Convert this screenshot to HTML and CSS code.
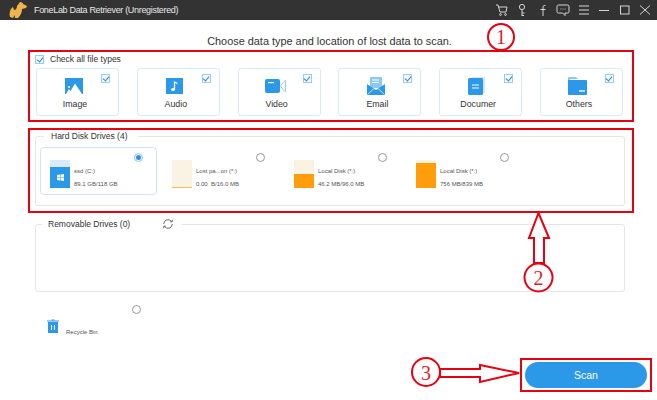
FILE: index.html
```html
<!DOCTYPE html>
<html lang="en">
<head>
<meta charset="utf-8">
<title>FoneLab Data Retriever</title>
<link rel="stylesheet" href="styles.css">
</head>
<body>
<div class="app">
  <header class="titlebar">
    <svg class="logo" viewBox="0 0 18 16" width="18" height="16"><path fill="#f0b44c" d="M1 15C0 11 1 7 4 5L5 8C7 8 8 6 8 4L11 0C13 0 14 1 14 2L18 4L17 6L13 7C13 10 12 13 9 16H6L6 13L4 16Z"/></svg>
    <span class="app-name">FoneLab Data Retriever (Unregistered)</span>
    <nav class="win-icons">
      <svg viewBox="0 0 14 14" width="14" height="14" class="wi"><path d="M1 2H3L5 9H11L12 4H3.500"/><circle cx="5.500" cy="11.500" r=".9"/><circle cx="10.500" cy="11.500" r=".9"/></svg>
      <svg viewBox="0 0 14 14" width="14" height="14" class="wi"><circle cx="7" cy="4" r="2.600"/><path d="M7 6.600V13M7 10H9.500M7 12.500H9"/></svg>
      <svg viewBox="0 0 14 14" width="14" height="14" class="wi"><path d="M9.500 2.500C7.500 2 7 3 7 5V13M4.500 6.500H9.500"/></svg>
      <svg viewBox="0 0 14 14" width="14" height="14" class="wi"><path d="M2.500 2H11.500Q13 2 13 3.500V8.500Q13 10 11.500 10H9V12.500L6.500 10H2.500Q1 10 1 8.500V3.500Q1 2 2.500 2Z"/><path d="M4.500 6H5.300M6.600 6H7.400M8.700 6H9.500"/></svg>
      <svg viewBox="0 0 14 14" width="14" height="14" class="wi"><path d="M2 3H12M2 7H12M2 11H12"/></svg>
      <svg viewBox="0 0 14 14" width="14" height="14" class="wi"><path d="M2 7.500H12"/></svg>
      <svg viewBox="0 0 14 14" width="14" height="14" class="wi"><rect x="2.500" y="3" width="8.500" height="8"/></svg>
      <svg viewBox="0 0 14 14" width="14" height="14" class="wi"><path d="M2 2.500L12 11.500M12 2.500L2 11.500"/></svg>
    </nav>
  </header>

  <main class="content">
    <h1 class="heading">Choose data type and location of lost data to scan.</h1>

    <label class="check-all"><span class="check"></span>Check all file types</label>

    <div class="types">
      <div class="type"><span class="check type-check"></span>
        <svg class="type-icon" viewBox="0 0 18 16" width="18" height="16"><rect width="18" height="16" fill="#2b98e8"/><circle cx="4" cy="9" r="1" fill="#fff"/><path fill="#fff" d="M1 16L4 11L5.500 13L10 5.500L17 16Z"/></svg>
        <span class="type-name">Image</span></div>
      <div class="type"><span class="check type-check"></span>
        <svg class="type-icon" viewBox="0 0 18 16" width="18" height="16"><rect width="17" height="16" fill="#2b98e8"/><ellipse cx="7" cy="11.500" rx="2" ry="1.600" fill="#fff"/><path d="M8.500 11.500V4L11.500 5.500" stroke="#fff" stroke-width="1.300" fill="none"/></svg>
        <span class="type-name">Audio</span></div>
      <div class="type"><span class="check type-check"></span>
        <svg class="type-icon" viewBox="0 0 21 14" width="21" height="14"><rect width="15" height="14" rx="2" fill="#2b98e8"/><rect x="3" y="3" width="6" height="1.200" fill="#fff"/><path d="M16 6L20.500 1V13L16 8Z" fill="#fff" stroke="#9dcdf2"/></svg>
        <span class="type-name">Video</span></div>
      <div class="type"><span class="check type-check"></span>
        <svg class="type-icon" viewBox="0 0 18 18" width="18" height="18"><rect x="3" y="0" width="12" height="11" rx="1" fill="#8cc8f4"/><path d="M5 3H12M5 5.500H12" stroke="#fff"/><path fill="#2b98e8" d="M0 7L9 13L18 7V18H0Z"/><path d="M0.500 17.500L7 11.500M17.500 17.500L11 11.500" stroke="#fff" stroke-width=".7"/></svg>
        <span class="type-name">Email</span></div>
      <div class="type"><span class="check type-check"></span>
        <svg class="type-icon" viewBox="0 0 18 18" width="18" height="18"><rect x="4" y="0" width="13" height="16" rx="1" fill="#cfe7fa"/><rect x="0" y="1" width="15" height="17" rx="1.500" fill="#2b98e8"/><path d="M4 8H11M4 11H11" stroke="#fff"/></svg>
        <span class="type-name">Documer</span></div>
      <div class="type"><span class="check type-check"></span>
        <svg class="type-icon" viewBox="0 0 19 18" width="19" height="18"><path fill="#8cc8f4" d="M0 1Q0 0 1 0H8L10 2H2V4H0Z"/><path fill="#2b98e8" d="M0 3H18Q19 3 19 4V17Q19 18 18 18H1Q0 18 0 17Z"/><path d="M11 14H17" stroke="#fff" stroke-width="1.300"/></svg>
        <span class="type-name">Others</span></div>
    </div>

    <fieldset class="group group-hdd">
      <legend class="group-title">Hard Disk Drives (4)</legend>
      <div class="drives">
        <div class="drive selected">
          <span class="radio on"></span>
          <div class="disk disk-sys"><div class="disk-fill sys-fill"><svg viewBox="0 0 7 7" width="7" height="7"><path fill="#fff" d="M0 1L3 .6V3.200H0ZM3.500 .5L7 0V3.200H3.500ZM0 3.700H3V6.400L0 6ZM3.500 3.700H7V7L3.500 6.500Z"/></svg></div></div>
          <div class="drive-text"><span>ssd (C:)</span><span>89.1 GB/118 GB</span></div>
        </div>
        <div class="drive">
          <span class="radio"></span>
          <div class="disk"><div class="disk-fill thin" style="height:1px"></div></div>
          <div class="drive-text"><span>Lost pa...on (*:)</span><span>0.00 &nbsp;B/16.0 MB</span></div>
        </div>
        <div class="drive">
          <span class="radio"></span>
          <div class="disk"><div class="disk-fill" style="height:14px"></div></div>
          <div class="drive-text"><span>Local Disk (*:)</span><span>46.2 MB/96.0 MB</span></div>
        </div>
        <div class="drive">
          <span class="radio"></span>
          <div class="disk"><div class="disk-fill" style="height:25px"></div></div>
          <div class="drive-text"><span>Local Disk (*:)</span><span>756 MB/839 MB</span></div>
        </div>
      </div>
    </fieldset>

    <fieldset class="group group-rem">
      <legend class="group-title rem-title">Removable Drives (0)
        <svg class="refresh" viewBox="0 0 14 14" width="12" height="12"><path d="M2 7A5 5 0 0 1 11 4M12 7A5 5 0 0 1 3 10"/><path d="M9.500 4.500H12V2M4.500 9.500H2V12" /></svg>
      </legend>
    </fieldset>

    <div class="recycle">
      <span class="radio"></span>
      <svg viewBox="0 0 12 14" width="12" height="14"><path fill="#2b98e8" d="M1 3H11V14H1Z"/><path d="M0 2H12M4.500 1H7.500" stroke="#2b98e8"/><path d="M4.500 6V11M7.500 6V11" stroke="#fff"/></svg>
      <span class="recycle-name">Recycle Bin</span>
    </div>

    <div class="actions"><button class="scan" type="button">Scan</button></div>
  </main>

  <div class="mark mark-1"></div>
  <div class="mark mark-2"></div>
  <div class="mark mark-3"></div>
  <svg class="notes" viewBox="0 0 657 400" width="657" height="400">
    <g class="note-line">
      <circle cx="501" cy="37" r="13"/>
      <circle cx="538.500" cy="277.500" r="14"/>
      <circle cx="426" cy="372" r="14"/>
      <path d="M538.500 213L549 238H544V263H534V238H529Z"/>
      <path d="M440 369H480V365L519 373L480 382V377H440Z"/>
    </g>
    <g class="note-num">
      <text x="501" y="44">1</text>
      <text x="538.500" y="285">2</text>
      <text x="426" y="380">3</text>
    </g>
  </svg>
</div>
</body>
</html>
```
FILE: styles.css
```css
* { box-sizing: border-box; }
html, body { margin: 0; padding: 0; background: #fff; }
body { font-family: "Liberation Sans", Arial, sans-serif; color: #333; }
.app { position: relative; width: 657px; height: 400px; overflow: hidden; }

.titlebar { display: flex; align-items: center; height: 20px; background: #333; padding: 0 5px 0 9px; }
.logo { flex: none; }
.app-name { margin-left: 7px; color: #e8e8e8; font-size: 9px; letter-spacing: -.32px; white-space: nowrap; }
.win-icons { margin-left: auto; display: flex; gap: 6.500px; }
.wi { fill: none; stroke: #d6d6d6; stroke-width: 1; }

.content { padding: 0 32px 0 35px; }
.heading { margin: 14px 0 0; font-size: 10.900px; font-weight: 400; line-height: 14px; text-align: center; padding-right: 1px; color: #333; }

.check { display: block; width: 9px; height: 9px; border: 1px solid #9bcdf3; position: relative; background: #f4faff; }
.check::after { content: ""; position: absolute; left: 1.500px; top: 0; width: 3px; height: 5px; border: solid #2b86d8; border-width: 0 1px 1px 0; transform: rotate(40deg); }

.check-all { display: flex; align-items: center; gap: 6px; height: 12px; margin-top: 5px; font-size: 8.500px; color: #333; }

.types { display: flex; justify-content: space-between; margin: 3px 2px 0 1px; }
.type { position: relative; width: 83px; height: 48px; padding-right: 7px; border: 1px solid #d6eafb; border-radius: 3px; display: flex; flex-direction: column; align-items: center; }
.type-icon { height: 18px; margin-top: 8px; }
.type-name { position: absolute; top: 29px; left: 0; right: 5px; text-align: center; font-size: 8.800px; line-height: 12px; color: #333; }
.type-check { position: absolute; top: 5px; right: 8px; }

.group { margin: 14px 0 0; padding: 0; border: 1px solid #e6e6e6; border-radius: 3px; min-width: 0; }
.group-hdd { height: 76px; }
.group-rem { height: 74px; margin-top: 12px; }
.group-title { font-size: 8.500px; line-height: 12px; padding: 0 10px 0 7px; margin-left: 8px; color: #333; }
.rem-title { margin-left: 6px; padding: 0 7px 0 6px; display: flex; align-items: center; gap: 32px; white-space: nowrap; }
.refresh { fill: none; stroke: #555; stroke-width: 1; }

.drives { display: flex; gap: 5px; margin: 5px 0 0 4px; }
.drive { position: relative; width: 117px; height: 48px; display: flex; padding: 12px 0 0 10px; border: 1px solid transparent; border-radius: 4px; gap: 3px; }
.drive.selected { border-color: #cfe3f7; }
.radio { position: absolute; top: 5px; left: 93px; width: 9px; height: 9px; border: 1px solid #999; border-radius: 50%; background: #fff; }
.radio.on { border-color: #8cc4f0; }
.radio.on::after { content: ""; position: absolute; inset: 1px; border-radius: 50%; background: #2b8fe8; }

.disk { flex: none; width: 20px; height: 28px; margin-left: -1px; background: #faf3e3; display: flex; align-items: flex-end; }
.disk-fill { width: 100%; background: #ff9e0a; }
.disk-fill.thin { background: #f3bb55; }
.disk-sys { background: #d8ebfa; }
.sys-fill { height: 21px; background: #2b98e8; display: flex; align-items: center; justify-content: center; }
.drive-text { display: flex; flex-direction: column; gap: 5.500px; padding-top: 8px; margin-left: 1px; font-size: 6px; line-height: 7px; color: #555; white-space: nowrap; }

.recycle { position: relative; height: 48px; margin: 8px 0 0 12px; padding-top: 19px; display: flex; align-items: flex-start; gap: 7px; }
.recycle .radio { top: 5px; left: 85px; }
.recycle-name { margin-top: 10px; font-size: 6px; line-height: 7px; color: #555; white-space: nowrap; }

.actions { display: flex; justify-content: flex-end; margin: 14px -22px 0 0; }
.scan { width: 122px; height: 26px; border: 0; border-radius: 13px; background: #2b98e8; color: #fff; font-family: inherit; font-size: 10.500px; padding: 0; }

.mark { position: absolute; border: 2px solid #e60012; }
.mark-1 { left: 28px; top: 50px; width: 606px; height: 72px; }
.mark-2 { left: 28px; top: 128px; width: 606px; height: 85px; }
.mark-3 { left: 520px; top: 358px; width: 132px; height: 34px; }

.notes { position: absolute; left: 0; top: 0; pointer-events: none; }
.note-line { fill: #fff; stroke: #e60012; stroke-width: 2; }
.note-num text { font-family: "Liberation Serif", serif; font-size: 20px; fill: #d8232a; text-anchor: middle; }
```
